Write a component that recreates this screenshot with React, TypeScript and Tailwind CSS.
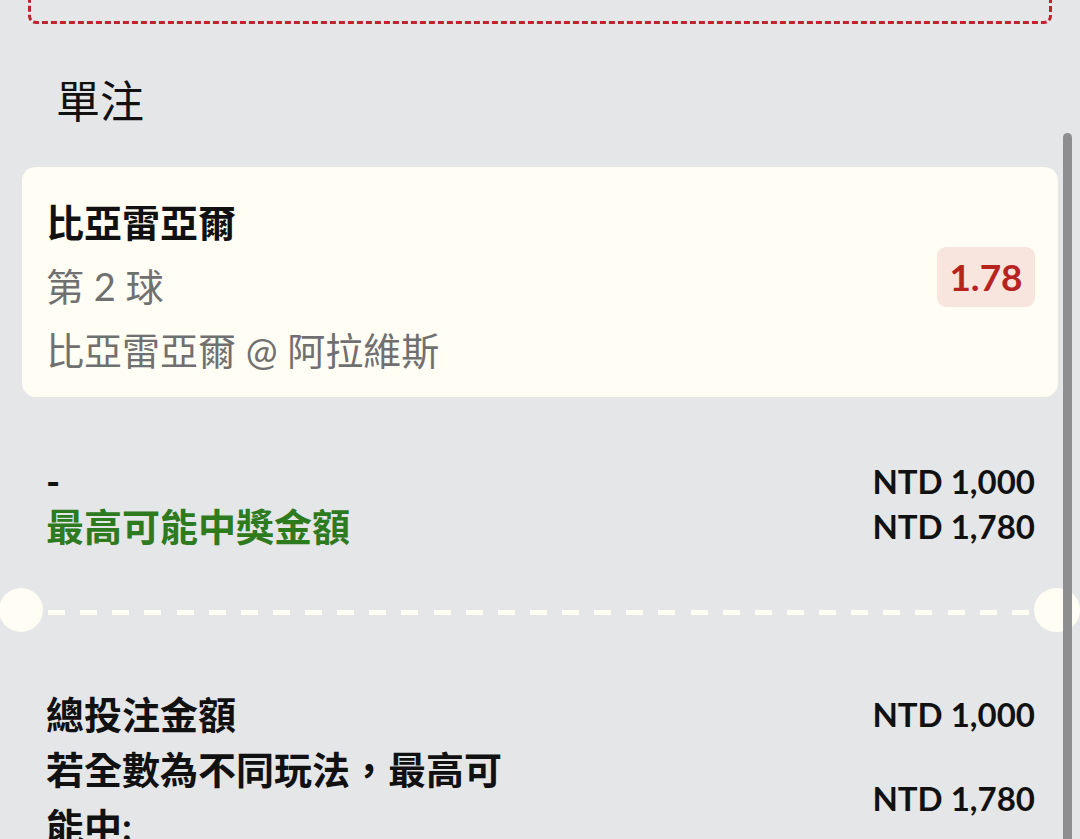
import React from "react";

export default function App() {
  const dashes = Array.from({ length: 31 }, (_, i) => i);
  return (
    <div className="relative w-[1080px] h-[839px] overflow-hidden bg-[#e5e6e8] text-[#111111] font-['Lato','Noto_Sans_CJK_TC',sans-serif]">
      {/* top dashed box (continues above the view) */}
      <div className="ml-[28px] w-[1024px] h-[40px] -mt-[16px] border-[3px] border-t-0 border-dashed border-[#c1232e] rounded-b-[8px]" />

      {/* title */}
      <div className="mt-[55px] pl-[56px] text-[44px] leading-[44px] font-normal text-[#111]">
        單注
      </div>

      {/* bet card */}
      <div className="mt-[44px] mx-[22px] rounded-[14px] bg-[#fffdf4] pl-[24px] pr-[23px] pt-[23px] pb-[15px] flex items-center justify-between">
        <div className="flex flex-col text-[38px] leading-[64px]">
          <div className="font-bold text-[#111]">比亞雷亞爾</div>
          <div className="text-[#707070]">第 2 球</div>
          <div className="text-[#707070]">比亞雷亞爾 @ 阿拉維斯</div>
        </div>
        <div className="-mt-[18px] w-[98px] h-[60px] rounded-[9px] bg-[#f7e5de] flex items-center justify-center text-[37px] font-bold text-[#b8231f]">
          1.78
        </div>
      </div>

      {/* stake rows */}
      <div className="mt-[62px] pl-[46px] pr-[45px] grid grid-cols-[1fr_auto] leading-[45px]">
        <div className="text-[38px] font-bold">-</div>
        <div className="text-[33px] font-bold text-right">NTD 1,000</div>
        <div className="text-[38px] font-bold text-[#2e7a1f]">最高可能中獎金額</div>
        <div className="text-[33px] font-bold text-right">NTD 1,780</div>
      </div>

      {/* ticket separator */}
      <div className="mt-[39px] h-[44px] flex items-center">
        <div className="-ml-[1px] w-[44px] h-[44px] rounded-full bg-[#fffdf4] shrink-0" />
        <div className="ml-[5px] w-[982px] h-[5px] mt-[4px] flex justify-between">
          {dashes.map((i) => (
            <div key={i} className="w-[17px] h-[5px] bg-[#fffdf4]" />
          ))}
        </div>
        <div className="ml-[5px] w-[46px] h-[44px] rounded-full bg-[#fffdf4] shrink-0" />
      </div>

      {/* totals */}
      <div className="mt-[55px] pl-[46px] pr-[45px] flex flex-col">
        <div className="flex items-center justify-between leading-[54px]">
          <div className="text-[38px] font-bold">總投注金額</div>
          <div className="text-[33px] font-bold">NTD 1,000</div>
        </div>
        <div className="flex items-center justify-between leading-[57px]">
          <div className="w-[480px] text-[38px] font-bold">若全數為不同玩法，最高可能中:</div>
          <div className="text-[33px] font-bold">NTD 1,780</div>
        </div>
      </div>

      {/* scrollbar */}
      <div className="absolute left-[1063px] top-[133px] w-[9px] h-[720px] rounded-full bg-[#8e8e90]" />
    </div>
  );
}
